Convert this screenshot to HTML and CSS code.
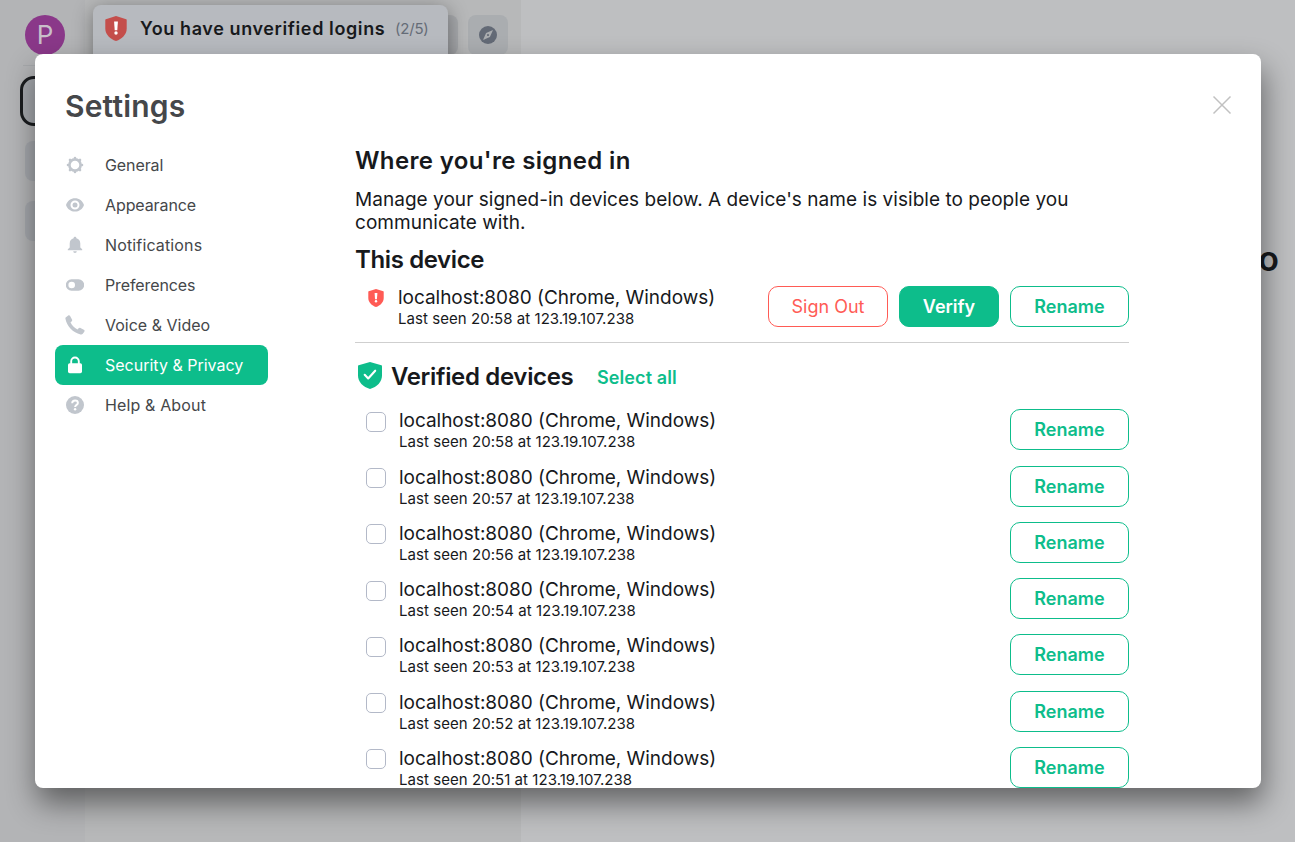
FILE: index.html
```html
<!DOCTYPE html>
<html lang="en">
<head>
<meta charset="utf-8">
<title>Settings</title>
<link rel="stylesheet" href="styles.css">
</head>
<body>
<svg class="defs" width="0" height="0">
  <symbol id="shield-warn" viewBox="0 0 22 25">
    <path fill="currentColor" d="M11 0 L21.2 3.2 Q21.7 3.4 21.7 4 V12.5 C21.7 18.5 17 23 11 25 C5 23 .3 18.5 .3 12.5 V4 Q.3 3.4 .8 3.2Z"/>
    <path class="mark" d="M9.1 5.6h3.8l-.6 8.6H9.7z"/><circle class="mark" cx="11" cy="17" r="1.7"/>
  </symbol>
</svg>
<div class="app">
  <div class="spaces">
    <div class="avatar">P</div>
    <div class="divider"></div>
    <div class="home"></div>
    <div class="space"></div>
    <div class="space"></div>
  </div>
  <div class="rooms">
    <div class="search"></div>
    <div class="explore"><svg width="18" height="18" viewBox="0 0 18 18"><circle cx="9" cy="9" r="9" fill="#636a76"/><path fill="#aaadb0" fill-rule="evenodd" d="M14 4 L10.9 10.9 4 14 7.1 7.1Z M9 7.9 a1.1 1.1 0 1 0 .01 0Z"/></svg></div>
  </div>
  <div class="main"><h1 class="welcome">o</h1></div>
</div>
<div class="toast">
  <svg class="toast-icon" width="22" height="25"><use href="#shield-warn"/></svg>
  <span class="toast-title">You have unverified logins</span>
  <span class="toast-count">(2/5)</span>
</div>
<div class="dialog">
  <div class="sidebar">
    <h2 class="title">Settings</h2>
    <div class="nav">
      <div class="tab"><svg width="18" height="18" viewBox="0 0 18 18"><circle cx="9" cy="9" r="5.6" fill="none" stroke="currentColor" stroke-width="2.6"/><path stroke="currentColor" stroke-width="2.6" stroke-linecap="round" d="M9 2.1V2M9 16v-.1M2.1 9H2M16 9h-.1M4.1 4.1 4 4M14 14l-.1-.1M14 4l-.1.1M4.1 13.9 4 14"/></svg><span class="narrow">General</span></div>
      <div class="tab"><svg width="18" height="18" viewBox="0 0 18 18"><path fill="currentColor" fill-rule="evenodd" d="M9 2.3C4.8 2.3 1.4 4.8 0 9c1.4 4.1 4.8 6.600 9 6.600s7.600-2.500 9-6.600c-1.400-4.200-4.800-6.700-9-6.700ZM9 4.500a4.500 4.500 0 1 1 0 9 4.500 4.500 0 0 1 0-9Z"/><circle cx="9" cy="9" r="2.500" fill="currentColor"/></svg><span class="narrow">Appearance</span></div>
      <div class="tab"><svg width="18" height="18" viewBox="0 0 18 18"><path fill="currentColor" d="M9 .8c.8 0 1.400.6 1.400 1.400 2.300.6 3.900 2.600 3.900 5.200v4l1.900 1.900v1H1.800v-1l1.900-1.900v-4c0-2.600 1.600-4.600 3.900-5.200C7.600 1.400 8.200.8 9 .8ZM7.200 15.300h3.600a1.800 1.800 0 0 1-3.600 0Z"/></svg><span class="wide">Notifications</span></div>
      <div class="tab"><svg width="18" height="18" viewBox="0 0 18 18"><path fill="currentColor" fill-rule="evenodd" d="M5.500 3.300h7a5.500 5.500 0 0 1 0 11.400h-7a5.500 5.500 0 0 1 0-11.400ZM5.700 5.700a3.300 3.300 0 1 0 0 6.600 3.300 3.300 0 0 0 0-6.600Z"/></svg><span class="narrow">Preferences</span></div>
      <div class="tab"><svg width="20" height="20" viewBox="0 0 20 20"><path fill="currentColor" d="M1 2.300 3.200.6c.7-.5 1.500-.3 1.900.4L7 4.500c.4.700.2 1.400-.4 1.900L5.500 7.300c1 2.800 3.700 5.700 7 7.200l1.100-1.200c.5-.6 1.200-.7 1.900-.3l3.300 1.800c.8.4 1 1.200.5 1.900l-1.500 2c-.6.700-1.300.9-2.200.7C8.100 17.700 1.600 11 .5 4 .3 3.200.4 2.800 1 2.300Z"/></svg><span>Voice &amp; Video</span></div>
      <div class="tab active"><svg width="18" height="18" viewBox="0 0 18 18"><path fill="none" stroke="currentColor" stroke-width="1.900" d="M5.200 8V5.300a3.800 3.800 0 0 1 7.600 0V8"/><rect x="2" y="7.200" width="14" height="10" rx="1.700" fill="currentColor"/></svg><span>Security &amp; Privacy</span></div>
      <div class="tab"><svg width="18" height="18" viewBox="0 0 18 18"><circle cx="9" cy="9" r="9" fill="currentColor"/><path fill="none" stroke="#fff" stroke-width="1.900" d="M6.200 7.200c0-1.700 1.200-2.700 2.900-2.700s2.800 1 2.800 2.400c0 2.100-2.800 1.900-2.800 4.200"/><circle cx="9.100" cy="13.300" r="1.200" fill="#fff"/></svg><span class="wide">Help &amp; About</span></div>
    </div>
  </div>
  <div class="content">
    <h3 class="heading where">Where you're signed in</h3>
    <p class="intro">Manage your signed-in devices below. A device's name is visible to people you<br>communicate with.</p>
    <h3 class="heading this">This device</h3>
    <div class="device own">
      <svg class="own-icon" width="16" height="18" viewBox="0 0 22 25"><use href="#shield-warn"/></svg>
      <div class="info"><div class="name">localhost:8080 (Chrome, Windows)</div><div class="seen">Last seen 20:58 at 123.19.107.238</div></div>
      <div class="btn danger">Sign Out</div><div class="btn primary">Verify</div><div class="btn">Rename</div>
    </div>
    <div class="section">
      <svg width="24" height="27" viewBox="0 0 24 27"><path fill="#0dbd8b" d="M12 0 23.400 3.300q.6.200.6.900V13.500C24 20 19 25 12 27 5 25 0 20 0 13.500V4.200q0-.7.6-.9Z"/><path fill="none" stroke="#fff" stroke-width="2.100" stroke-linecap="round" stroke-linejoin="round" d="m6.700 12.800 3.500 3.700 7-7.800"/></svg>
      <h3 class="heading verified">Verified devices</h3>
      <span class="select">Select all</span>
    </div>
    <div class="list">
      <div class="device"><div class="check"></div><div class="info"><div class="name">localhost:8080 (Chrome, Windows)</div><div class="seen">Last seen 20:58 at 123.19.107.238</div></div><div class="btn">Rename</div></div>
      <div class="device"><div class="check"></div><div class="info"><div class="name">localhost:8080 (Chrome, Windows)</div><div class="seen">Last seen 20:57 at 123.19.107.238</div></div><div class="btn">Rename</div></div>
      <div class="device"><div class="check"></div><div class="info"><div class="name">localhost:8080 (Chrome, Windows)</div><div class="seen">Last seen 20:56 at 123.19.107.238</div></div><div class="btn">Rename</div></div>
      <div class="device"><div class="check"></div><div class="info"><div class="name">localhost:8080 (Chrome, Windows)</div><div class="seen">Last seen 20:54 at 123.19.107.238</div></div><div class="btn">Rename</div></div>
      <div class="device"><div class="check"></div><div class="info"><div class="name">localhost:8080 (Chrome, Windows)</div><div class="seen">Last seen 20:53 at 123.19.107.238</div></div><div class="btn">Rename</div></div>
      <div class="device"><div class="check"></div><div class="info"><div class="name">localhost:8080 (Chrome, Windows)</div><div class="seen">Last seen 20:52 at 123.19.107.238</div></div><div class="btn">Rename</div></div>
      <div class="device"><div class="check"></div><div class="info"><div class="name">localhost:8080 (Chrome, Windows)</div><div class="seen">Last seen 20:51 at 123.19.107.238</div></div><div class="btn">Rename</div></div>
    </div>
  </div>
  <svg class="close" width="20" height="20" viewBox="0 0 20 20"><path d="M1.500 1.500l17 17M18.500 1.500l-17 17" stroke="#c1c1c1" stroke-width="1.500" fill="none"/></svg>
</div>
</body>
</html>
```
FILE: styles.css
```css
* { box-sizing: border-box; }
body { margin: 0; height: 842px; overflow: hidden; font-family: Inter, sans-serif; color: #17191c; }
h1, h2, h3, p { margin: 0; }
.defs { position: absolute; }
.mark { fill: #fff; }
.app { display: flex; height: 842px; }
.spaces { width: 85px; background: #b3b4b6; padding: 15px 0 0 20px; }
.avatar { width: 40px; height: 40px; margin-left: 5px; border-radius: 50%; background: #8a3889; color: #c8bfc9; font-size: 26px; line-height: 40px; text-align: center; }
.divider { height: 1px; width: 42px; margin: 10px 0 10px 3px; background: #a7a9ac; }
.home { width: 50px; height: 50px; border: 3px solid #1a1c1f; border-radius: 14px; background: #a5a8ad; }
.space { width: 40px; height: 40px; margin: 15px 0 20px 5px; border-radius: 8px; background: #a5a8ad; }
.rooms { width: 436px; background: #b7b8b9; padding: 15px 13px 0 15px; display: flex; justify-content: space-between; }
.search { width: 358px; height: 40px; border-radius: 8px; background: #a7a9ac; }
.explore { width: 40px; height: 40px; border-radius: 8px; background: #aaadb0; display: flex; align-items: center; justify-content: center; }
.main { flex: 1; background: #bebfc1; }
.welcome { font-size: 34px; font-weight: 600; line-height: 40px; padding: 239px 16px 0 0; text-align: right; }
.toast { position: absolute; left: 93px; top: 5px; width: 355px; height: 80px; border-radius: 8px; background: #b7babf; box-shadow: 0 4px 20px rgba(0,0,0,.4); display: flex; padding: 11px 0 0 12px; white-space: nowrap; }
.toast-icon { color: #c44e4b; margin-right: 13px; flex: none; }
.toast-icon .mark { fill: #c9c9c9; }
.toast-title { width: 255px; font-size: 18px; font-weight: 600; line-height: 25px; letter-spacing: .61px; }
.toast-count { font-size: 15px; line-height: 25px; color: #656c77; letter-spacing: -.2px; }
.dialog { position: absolute; left: 35px; top: 54px; width: 1226px; height: 734px; border-radius: 8px; background: #fff; overflow: hidden; box-shadow: 2px 15px 30px 0 rgba(0,0,0,.48); display: flex; }
.sidebar { width: 320px; flex: none; padding: 32px 0 0 20px; }
.title { margin-left: 10px; font-size: 30px; font-weight: 600; line-height: 40px; letter-spacing: .17px; color: #45474a; }
.nav { padding-top: 19px; }
.tab { width: 213px; height: 40px; border-radius: 8px; display: grid; grid-template-columns: 40px 1fr; column-gap: 10px; align-items: center; color: #c1c6cd; }
.tab svg { justify-self: center; }
.tab span { color: #45474a; font-size: 16px; line-height: 40px; white-space: nowrap; }
.tab .narrow { letter-spacing: -.1px; }
.tab .wide { letter-spacing: .14px; }
.tab.active { background: #0dbd8b; color: #fff; }
.tab.active span { color: #fff; }
.content { width: 774px; flex: none; padding-top: 93px; }
.heading { font-size: 24px; font-weight: 600; line-height: 28px; white-space: nowrap; }
.where { letter-spacing: .35px; }
.intro { margin-top: 13px; font-size: 19px; line-height: 23px; letter-spacing: .04px; white-space: nowrap; }
.this { margin-top: 12px; letter-spacing: -.38px; }
.verified { letter-spacing: -.33px; }
.device { display: flex; height: 41px; margin-bottom: 15.25px; white-space: nowrap; }
.device.own { height: 57px; margin: 12px 0 0; border-bottom: 1px solid #cfcfcf; }
.own-icon { width: 16px; height: 18px; margin: 3px 15px 0 13px; color: #ff5b55; }
.own .info { margin-left: -1px; }
.info { flex: 1; padding-top: 1px; }
.name { font-size: 19px; line-height: 22px; letter-spacing: -.03px; }
.seen { font-size: 15px; line-height: 20px; letter-spacing: .05px; }
.btn { height: 41px; width: 119px; margin-left: 11px; border: 1px solid #0dbd8b; border-radius: 10px; color: #0dbd8b; font-size: 18px; font-weight: 600; line-height: 39px; text-align: center; }
.btn.primary { width: 100px; color: #fff; background: #0dbd8b; }
.btn.danger { width: 120px; color: #ff5b55; border-color: #ff5b55; font-weight: 400; }
.section { display: flex; padding: 19px 0 0 3px; }
.section .heading { margin-left: 9px; padding-top: 1px; width: 206px; line-height: 28px; }
.select { font-size: 18px; font-weight: 600; line-height: 31px; letter-spacing: .1px; color: #0dbd8b; }
.list { padding-top: 16.4px; }
.check { width: 20px; height: 20px; margin: 2.4px 13px 0 11px; border: 1px solid #b3b9c8; border-radius: 5px; }
.close { position: absolute; right: 29px; top: 41px; }
```
